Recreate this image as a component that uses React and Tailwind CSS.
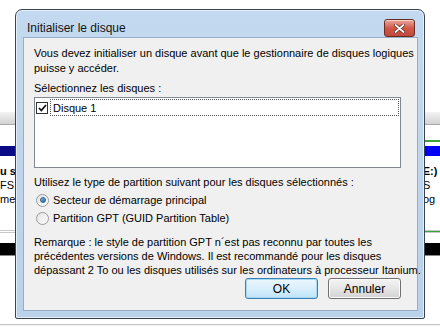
import React from 'react';

const font = { fontFamily: '"Liberation Sans", Arial, sans-serif' };

function CloseButton() {
  return (
    <div className="w-[31px] h-[18px] rounded-[3px] border border-[#6b2a22] bg-gradient-to-b from-[#e8a99c] via-[#d0584a] to-[#c04a3a] flex items-center justify-center shadow-[inset_0_1px_0_rgba(255,255,255,0.5)]">
      <svg width="11" height="9" viewBox="0 0 11 9">
        <path d="M1.5 1 L9.5 8 M9.5 1 L1.5 8" stroke="#5a1d16" strokeWidth="3.2" strokeLinecap="round" />
        <path d="M1.5 1 L9.5 8 M9.5 1 L1.5 8" stroke="#ffffff" strokeWidth="1.8" strokeLinecap="round" />
      </svg>
    </div>
  );
}

function Checkbox() {
  return (
    <div className="w-[12px] h-[12px] border border-[#333] bg-white flex items-center justify-center shrink-0">
      <svg width="9" height="8" viewBox="0 0 9 8">
        <path d="M1 4 L3.3 6.5 L8 1" stroke="#111" strokeWidth="1.8" fill="none" />
      </svg>
    </div>
  );
}

function Radio({ checked }) {
  return (
    <div className="w-[13px] h-[13px] rounded-full border border-[#9a9a9a] bg-gradient-to-br from-[#e6e6e6] to-[#fbfbfb] flex items-center justify-center shrink-0">
      {checked && (
        <div className="w-[6px] h-[6px] rounded-full bg-gradient-to-br from-[#8cc4ee] to-[#1b5c9e] border border-[#2a5f94]" />
      )}
    </div>
  );
}

function Button({ children, primary }) {
  return (
    <div
      className={`w-[73px] h-[21px] rounded-[3px] flex items-center justify-center text-[12px] text-black ${
        primary
          ? 'border border-[#3c7fb1] bg-gradient-to-b from-[#ecf7fd] via-[#d9effc] to-[#bfe4f8] shadow-[inset_0_0_0_1px_#a6d9f5]'
          : 'border border-[#707070] bg-gradient-to-b from-[#f4f4f4] via-[#e6e6e6] to-[#d2d2d2] shadow-[inset_0_0_0_1px_#fcfcfc]'
      }`}
    >
      {children}
    </div>
  );
}

function Background() {
  return (
    <div className="flex flex-col text-[11px] text-black" style={font}>
      <div className="h-[112px]" />
      <div className="h-[13px] bg-gradient-to-b from-[#f2f2f2] to-[#d3d3d3] border-b border-[#a8a8a8]" />
      <div className="h-[17px] flex items-end">
        <div className="w-[423px]" />
        <div className="flex-1 h-[2px] bg-[#3aa33a]" />
      </div>
      <div className="h-[4px]" />
      <div className="h-[10px] flex">
        <div className="w-[16px] bg-[#0a0a86]" />
        <div className="flex-1 bg-[#0000f5]" />
      </div>
      <div className="h-[8px]" />
      <div className="flex justify-between leading-[14px]">
        <div className="flex flex-col whitespace-nowrap">
          <span className="font-bold">u sy</span>
          <span>FS</span>
          <span>me,</span>
        </div>
        <div className="flex flex-col w-[17px]">
          <span className="font-bold whitespace-nowrap -ml-[4px]">(E:)</span>
          <span>S</span>
          <span className="whitespace-nowrap">og</span>
        </div>
      </div>
      <div className="h-[24px]" />
      <div className="flex h-[3px] border-t border-b border-[#c8c8c8]">
        <div className="flex-1" />
        <div className="w-[17px] bg-[#3aa33a]" />
      </div>
      <div className="h-[10px]" />
      <div className="h-[13px] bg-black border-b border-[#888]" />
      <div className="h-[68px]" />
      <div className="h-[2px] border-t border-[#c8c8c8] bg-[#f0f0f0]" />
    </div>
  );
}

function Dialog() {
  return (
    <div
      className="absolute left-[15px] top-[9px] w-[410px] h-[310px] rounded-t-[7px] rounded-b-[2px] border border-[#3a4350] bg-gradient-to-b from-[#c3d9ef] to-[#b9d2ea] shadow-[inset_0_0_0_1px_rgba(255,255,255,0.6)] flex flex-col"
      style={font}
    >
      {/* Title bar */}
      <div className="h-[27px] flex items-start justify-between pl-[11px] pr-[9px]">
        <span className="text-[12px] leading-[14px] text-[#141414] mt-[11px]">Initialiser le disque</span>
        <div className="mt-[9px]">
          <CloseButton />
        </div>
      </div>

      {/* Client area */}
      <div className="ml-[7px] mr-[6px] h-[274px] bg-[#f0f0f0] border border-[#95afc9] text-[11px] leading-[14px] text-black flex flex-col pl-[10px] pr-[16px] whitespace-nowrap">
        <p className="mt-[8px]">Vous devez initialiser un disque avant que le gestionnaire de disques logiques</p>
        <p className="mt-[1px]">puisse y accéder.</p>
        <p className="mt-[6px]">Sélectionnez les disques :</p>

        <div className="mt-[2px] h-[71px] bg-white border border-[#828790] px-[1px] pt-[1px]">
          <div className="flex items-center gap-[2px]">
            <Checkbox />
            <div className="flex-1 h-[17px] border border-dotted border-[#555] flex items-center pl-[2px]">
              Disque 1
            </div>
          </div>
        </div>

        <p className="mt-[7px]">Utilisez le type de partition suivant pour les disques sélectionnés :</p>

        <div className="mt-[4px] flex flex-col gap-[4px] pl-[2px]">
          <div className="flex items-center gap-[4px] h-[14px]">
            <Radio checked />
            <span className="leading-[13px]">Secteur de démarrage principal</span>
          </div>
          <div className="flex items-center gap-[4px] h-[14px]">
            <Radio />
            <span className="leading-[13px]">Partition GPT (GUID Partition Table)</span>
          </div>
        </div>

        <div className="mt-[10px]">
          <p>Remarque : le style de partition GPT n´est pas reconnu par toutes les</p>
          <p>précédentes versions de Windows. Il est recommandé pour les disques</p>
          <p>dépassant 2 To ou les disques utilisés sur les ordinateurs à processeur Itanium.</p>
        </div>

        <div className="mt-[1px] flex justify-end gap-[10px]">
          <Button primary>OK</Button>
          <Button>Annuler</Button>
        </div>
      </div>
    </div>
  );
}

export default function App() {
  return (
    <div className="relative w-[440px] h-[333px] bg-white overflow-hidden">
      <Background />
      <Dialog />
    </div>
  );
}
